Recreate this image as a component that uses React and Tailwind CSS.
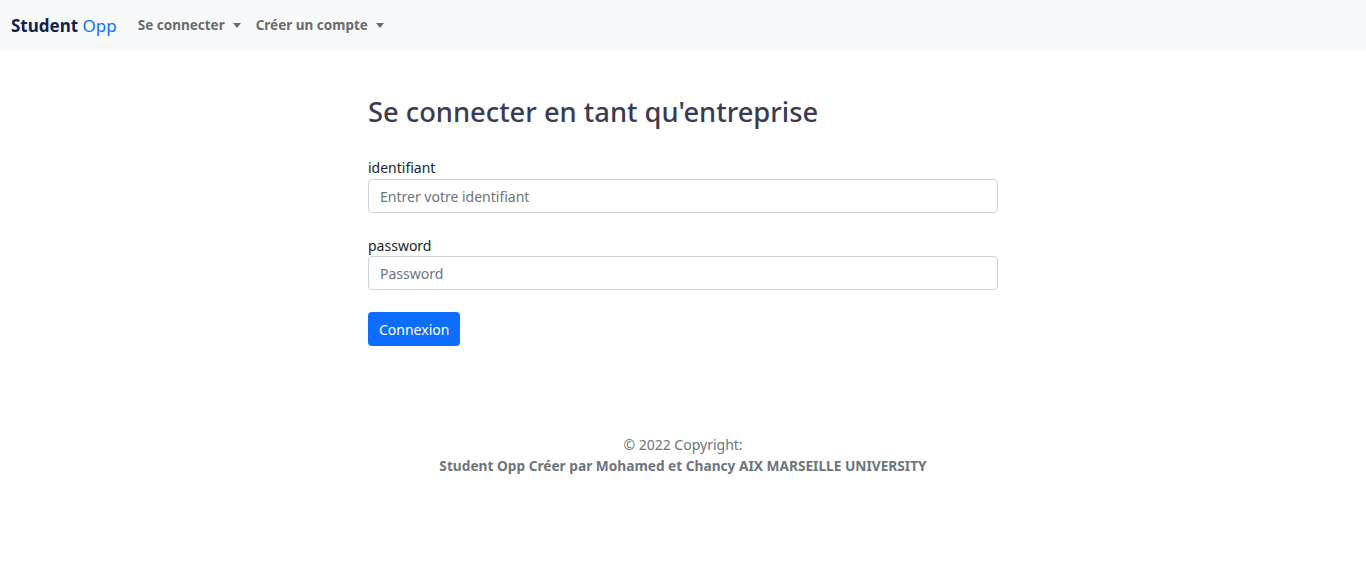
export default function App() {
  const font = { fontFamily: '"Noto Sans", "Open Sans", sans-serif' };
  return (
    <div className="min-h-[568px] bg-white font-['Noto_Sans',sans-serif]" style={font}>
      <nav className="h-[50px] bg-[#f8f9fa] flex items-center px-[11px]">
        <div className="text-[17px] text-[#14204a] mr-[21px] leading-none">
          <span className="font-bold">Student</span> <span className="text-[#0d6efd]">Opp</span>
        </div>
        <div className="flex items-center gap-[15px] text-[13.5px] font-bold text-[#6b6b6b]">
          <span className="flex items-center">Se connecter<span className="ml-[8px] border-x-[4px] border-x-transparent border-t-[5px] border-t-[#6b6b6b] w-0 h-0" /></span>
          <span className="flex items-center">Créer un compte<span className="ml-[8px] border-x-[4px] border-x-transparent border-t-[5px] border-t-[#6b6b6b] w-0 h-0" /></span>
        </div>
      </nav>
      <main className="w-[630px] mx-auto pt-[42px]">
        <h3 className="text-[27.3px] text-[#3a3b50] leading-[40px] font-medium">Se connecter en tant qu'entreprise</h3>
        <div className="mt-[26px]">
          <label className="block text-[14px] text-[#212529] leading-[20px] mb-[1px]">identifiant</label>
          <input className="w-full h-[34px] border border-[#ced4da] rounded-[4px] px-[11px] text-[14px] placeholder:text-[#6c757d] outline-none" placeholder="Entrer votre identifiant" />
        </div>
        <div className="mt-[23px]">
          <label className="block text-[14px] text-[#212529] leading-[20px]">password</label>
          <input type="password" className="w-full h-[34px] border border-[#ced4da] rounded-[4px] px-[11px] text-[14px] placeholder:text-[#6c757d] outline-none" placeholder="Password" />
        </div>
        <button className="mt-[22px] h-[34px] px-[11px] bg-[#0d6efd] text-white text-[14px] rounded-[4px]">Connexion</button>
      </main>
      <footer className="mt-[88px] text-center text-[#6c757d] text-[14px] leading-[21px]">
        <div>© 2022 Copyright:</div>
        <div className="font-bold text-[13.7px]">Student Opp Créer par Mohamed et Chancy AIX MARSEILLE UNIVERSITY</div>
      </footer>
    </div>
  );
}
